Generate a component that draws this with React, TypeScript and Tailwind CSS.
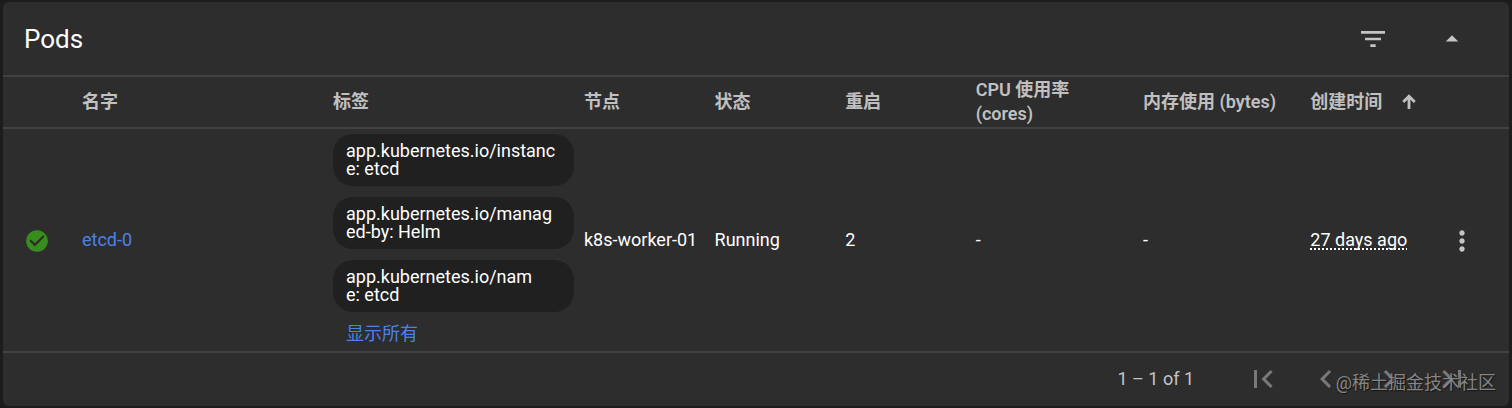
import { useState } from "react";
import {
  MdArrowDropUp,
  MdCheckCircle,
  MdChevronLeft,
  MdChevronRight,
  MdFilterList,
  MdFirstPage,
  MdLastPage,
  MdMoreVert,
} from "react-icons/md";

// each label is kept as the two lines shown in its chip
const pods = [
  {
    name: "etcd-0",
    labels: [
      ["app.kubernetes.io/instanc", "e: etcd"],
      ["app.kubernetes.io/manag", "ed-by: Helm"],
      ["app.kubernetes.io/nam", "e: etcd"],
    ],
    node: "k8s-worker-01",
    status: "Running",
    restarts: 2,
    cpu: "-",
    memory: "-",
    created: "27 days ago",
  },
];

const pagerButtons = [
  { label: "First page", Icon: MdFirstPage },
  { label: "Previous page", Icon: MdChevronLeft },
  { label: "Next page", Icon: MdChevronRight },
  { label: "Last page", Icon: MdLastPage },
];

function SortArrow() {
  return (
    <svg width="14" height="16" viewBox="0 0 14 16" fill="none" stroke="currentColor" strokeWidth="2.8" aria-hidden="true">
      <path d="M7 15V2.5M1.2 8L7 2.2L12.8 8" />
    </svg>
  );
}

export default function App() {
  const [open, setOpen] = useState(true);

  return (
    <main className="bg-[#1c1c1c] px-[3px] pt-[2px] pb-[3px] font-[Roboto,'Noto_Sans_CJK_SC',sans-serif] text-lg leading-6 text-white">
      <section className="relative rounded-md bg-[#2d2d2d]">
        <header className="flex h-[73px] items-center justify-between pr-[26px] pl-[21px]">
          <h1 className="text-[26px] leading-8">Pods</h1>
          <div className="flex items-center gap-4 text-[#c4c4c4]">
            <button type="button" aria-label="Filter" className="flex w-[63px] justify-center">
              <MdFilterList size={32} />
            </button>
            <button
              type="button"
              aria-label="Collapse"
              aria-expanded={open}
              onClick={() => setOpen(!open)}
              className="flex w-[63px] justify-center"
            >
              <MdArrowDropUp size={30} />
            </button>
          </div>
        </header>

        {open ? (
          <>
            <table className="w-full table-fixed border-collapse text-left">
              <colgroup>
                <col className="w-[79px]" />
                <col className="w-1/6" />
                <col className="w-1/6" />
                <col className="w-[8.67%]" />
                <col className="w-[8.67%]" />
                <col className="w-[8.67%]" />
                <col className="w-1/9" />
                <col className="w-1/9" />
                <col />
                <col className="w-[94px]" />
              </colgroup>
              <thead>
                <tr className="h-[52px] border-y-2 border-[#424242] text-[#c0c0c0] [&>th]:p-0 [&>th]:font-semibold">
                  <th />
                  <th>名字</th>
                  <th>标签</th>
                  <th>节点</th>
                  <th>状态</th>
                  <th>重启</th>
                  <th>
                    CPU 使用率
                    <br />
                    (cores)
                  </th>
                  <th>内存使用 (bytes)</th>
                  <th aria-sort="ascending">
                    <button type="button" className="flex items-center gap-5 whitespace-nowrap">
                      创建时间
                      <SortArrow />
                    </button>
                  </th>
                  <th />
                </tr>
              </thead>
              <tbody>
                {pods.map((pod) => (
                  <tr key={pod.name} className="border-b-2 border-[#424242]">
                    <td className="pt-[2px] pl-[21px] text-[#388e1c]">
                      <MdCheckCircle size={26} />
                    </td>
                    <td>
                      <a href="#" className="text-[#4c82e8]">
                        {pod.name}
                      </a>
                    </td>
                    <td className="py-[5px] pr-[10px]">
                      <ul className="flex flex-col gap-[11px]">
                        {pod.labels.map(([first, second]) => (
                          <li key={first} className="rounded-[20px] bg-[#202020] px-[13px] py-2 leading-[18px] whitespace-nowrap">
                            {first}
                            <br />
                            {second}
                          </li>
                        ))}
                      </ul>
                      <button type="button" className="mt-[10px] block px-[13px] text-[#4c82e8]">
                        显示所有
                      </button>
                    </td>
                    <td className="whitespace-nowrap">{pod.node}</td>
                    <td>{pod.status}</td>
                    <td>{pod.restarts}</td>
                    <td>{pod.cpu}</td>
                    <td>{pod.memory}</td>
                    <td className="whitespace-nowrap">
                      <span className="underline decoration-dotted decoration-2 underline-offset-2 [text-decoration-skip-ink:none]">
                        {pod.created}
                      </span>
                    </td>
                    <td className="pt-[2px] text-[#c4c4c4]">
                      <button type="button" aria-label="Actions" className="mx-auto block">
                        <MdMoreVert size={32} />
                      </button>
                    </td>
                  </tr>
                ))}
              </tbody>
            </table>

            <footer className="flex h-[53px] items-center justify-end pr-[26px] pb-[2px]">
              <span className="mr-[37px] text-[#c4c4c4]">1 – 1 of 1</span>
              {pagerButtons.map(({ label, Icon }) => (
                <button key={label} type="button" aria-label={label} disabled className="flex w-[63px] justify-center text-[#797979]">
                  <Icon size={36} />
                </button>
              ))}
            </footer>
          </>
        ) : null}

        <span className="pointer-events-none absolute right-[13px] bottom-[11px] text-[#858585] [text-shadow:1px_1px_1px_#151515]">
          @稀土掘金技术社区
        </span>
      </section>
    </main>
  );
}
